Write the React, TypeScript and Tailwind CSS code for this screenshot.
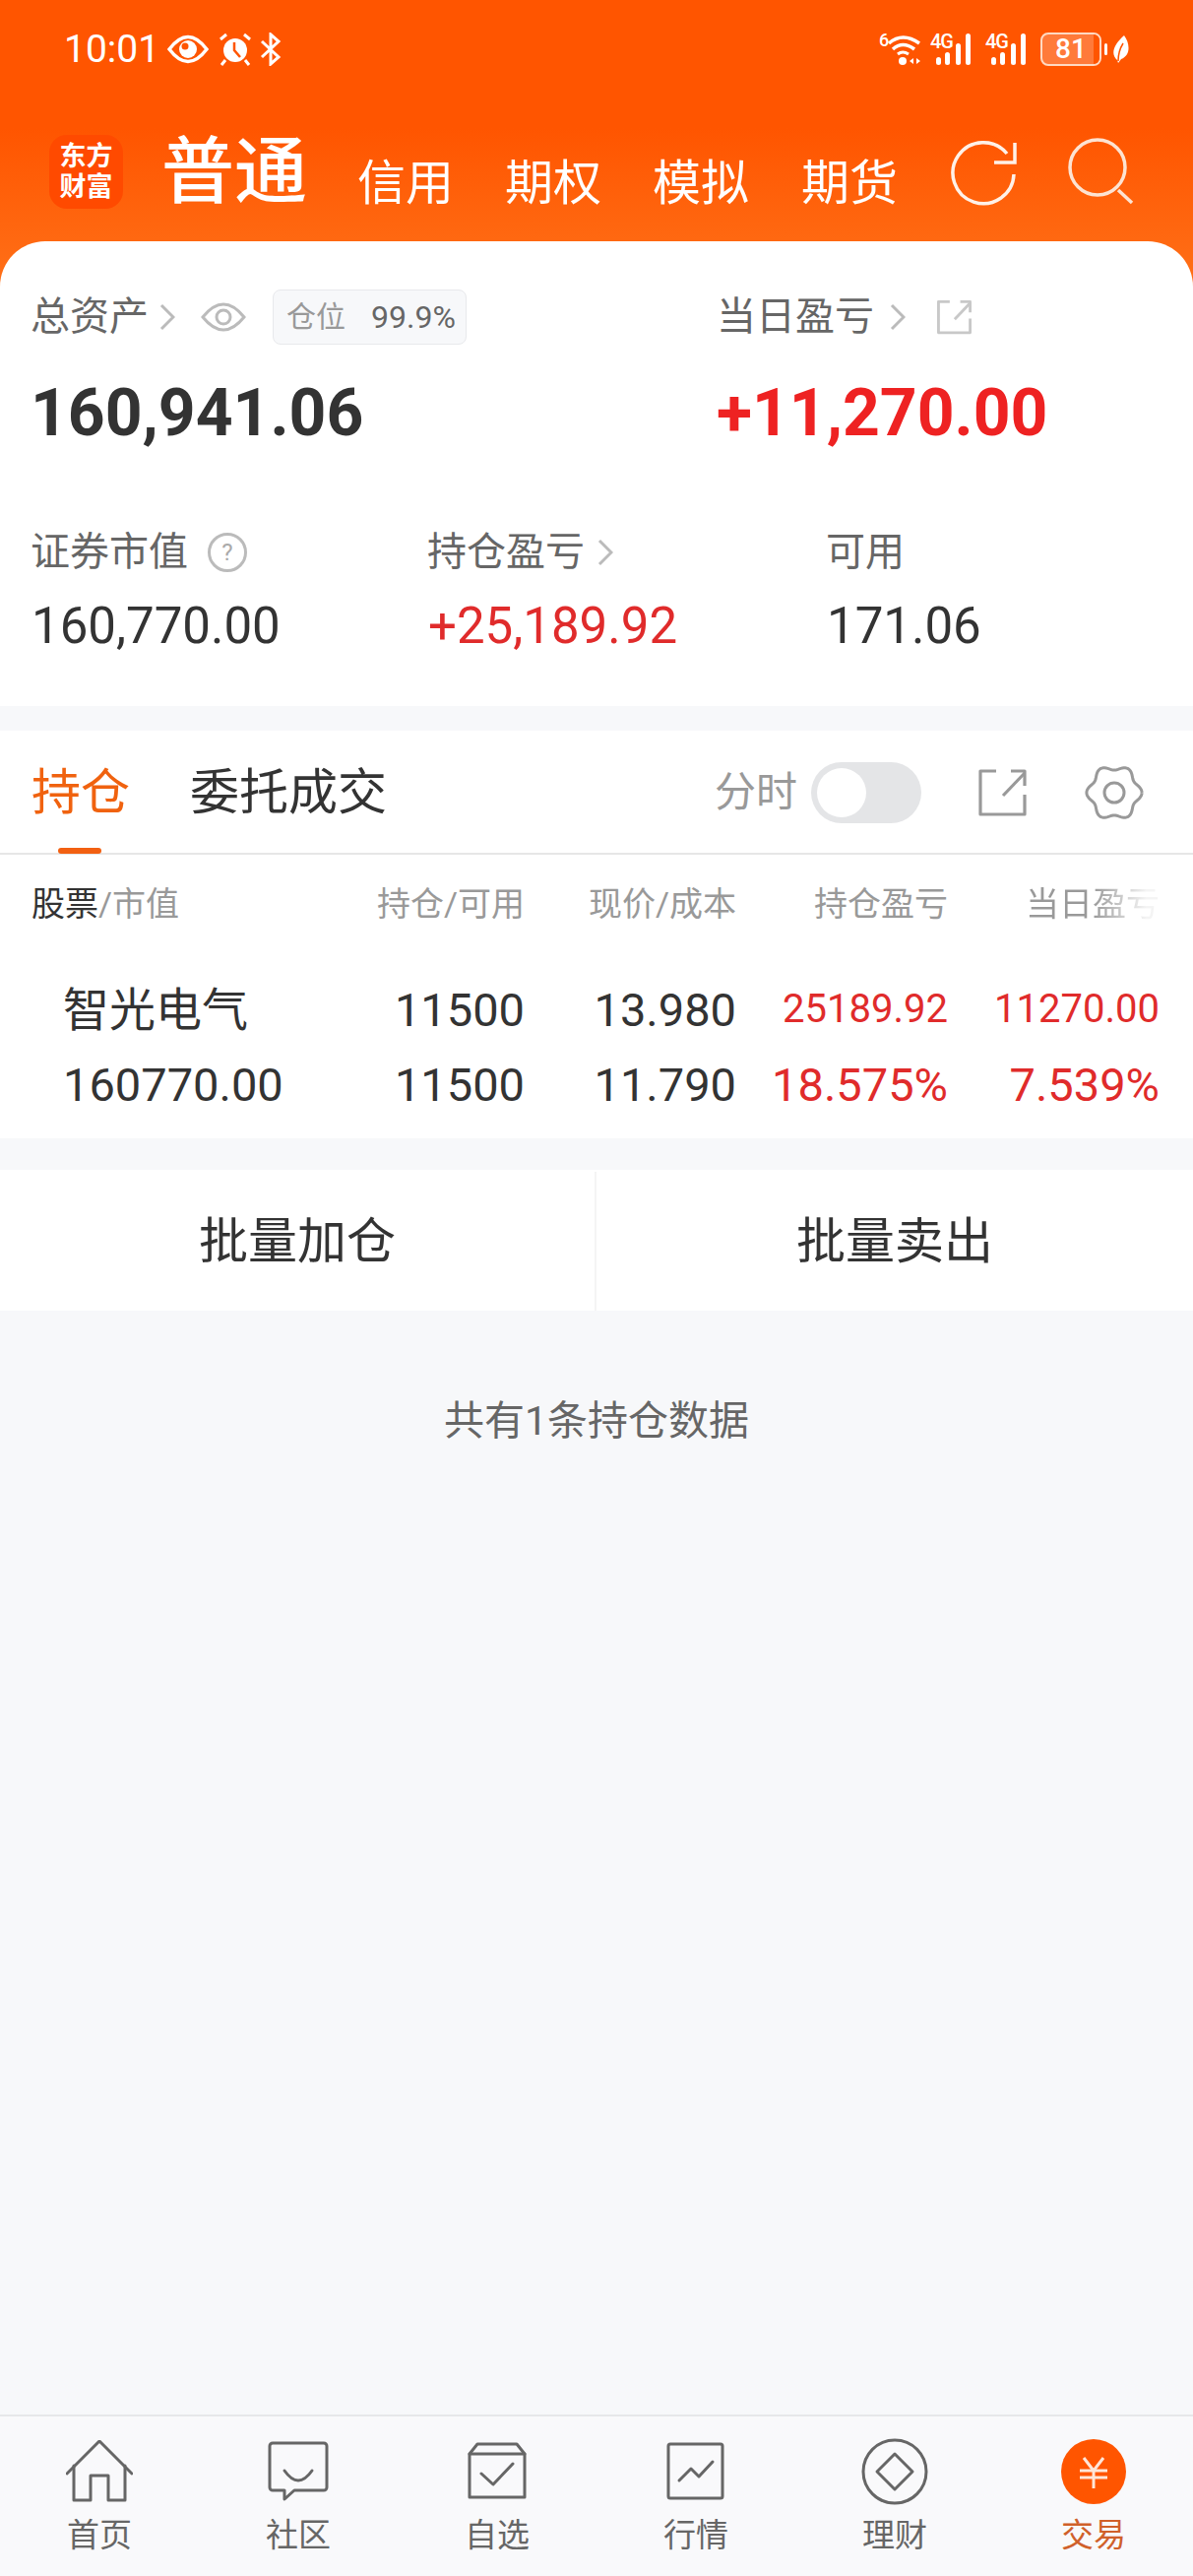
import type { ReactNode } from "react";

// gear outline: six soft lobes around a circle
const gearPath = Array.from({ length: 121 }, (_, i) => {
  const a = (i / 120) * Math.PI * 2;
  const r = 25.5 + 2.6 * Math.cos(6 * a);
  return `${i === 0 ? "M" : "L"}${(30 + r * Math.cos(a)).toFixed(2)} ${(29 + r * Math.sin(a)).toFixed(2)}`;
}).join(" ");

function Chevron({ className = "" }: { className?: string }) {
  return (
    <svg width="16" height="28" viewBox="0 0 16 28" className={className} fill="none" stroke="#bbbbbb" strokeWidth="3">
      <path d="M2 2 L14 14 L2 26" />
    </svg>
  );
}

function ShareIcon({ size, color, width }: { size: number; color: string; width: number }) {
  return (
    <svg width={size} height={size} viewBox="0 0 49 49" fill="none" stroke={color} strokeWidth={width} strokeLinejoin="round">
      <path d="M18 2 H2 V46 H47 V26" />
      <path d="M25 27 L47 4" />
      <path d="M33 2 H47 V17" />
    </svg>
  );
}

function Signal() {
  return (
    <div className="relative h-[34px] w-[46px]">
      <span className="absolute left-0 top-0 text-[20px] font-medium leading-[18px] tracking-[-1px] text-white">4G</span>
      <svg width="46" height="34" viewBox="0 0 46 34" fill="white">
        <rect x="6" y="25" width="5" height="8" rx="2.5" />
        <rect x="15" y="20" width="5" height="13" rx="2.5" />
        <rect x="26" y="11" width="5" height="22" rx="2.5" />
        <rect x="36" y="1" width="5" height="32" rx="2.5" />
      </svg>
    </div>
  );
}

function StatusBar() {
  return (
    <div className="flex h-[100px] items-center justify-between pl-[65px] pr-[64px]">
      <div className="flex items-center">
        <span className="w-[91px] text-[39px] leading-none text-white">10:01</span>
        <svg width="42" height="30" viewBox="0 0 42 30" className="ml-[14px]">
          <path d="M2 15 Q21 -10 40 15 Q21 40 2 15 Z" fill="none" stroke="white" strokeWidth="3.5" />
          <circle cx="21" cy="15" r="9" fill="white" />
          <circle cx="18" cy="12" r="3.5" fill="#ff5500" />
        </svg>
        <svg width="34" height="34" viewBox="0 0 34 34" className="ml-[10px]">
          <circle cx="17" cy="18" r="12" fill="white" />
          <path d="M16 10 V18 L22 25" fill="none" stroke="#ff5500" strokeWidth="2.5" />
          <path d="M2 7 L8 2 M32 7 L26 2 M7 28 L3 33 M27 28 L31 33" stroke="white" strokeWidth="3" />
        </svg>
        <svg width="22" height="34" viewBox="0 0 22 34" className="ml-[8px]" fill="none" stroke="white" strokeWidth="3">
          <path d="M2 9 L19 25 L11 32 V2 L19 9 L2 25" />
        </svg>
      </div>
      <div className="flex items-center">
        <div className="relative h-[34px] w-[44px]">
          <span className="absolute left-0 top-0 text-[18px] font-medium leading-[16px] text-white">6</span>
          <svg width="44" height="34" viewBox="0 0 44 34" fill="none" stroke="white">
            <path d="M10 11 Q24 -1 41 11" strokeWidth="3.5" />
            <path d="M14 17 Q24 8 36 17" strokeWidth="3.5" />
            <path d="M19 22 Q24 18 30 22" strokeWidth="3" />
            <circle cx="24" cy="29" r="4" fill="white" stroke="none" />
            <path d="M31 29 L35 26 V32 Z M38 26 V32 L42 29 Z" fill="white" stroke="none" />
          </svg>
        </div>
        <div className="ml-[8px] flex gap-[10px]">
          <Signal />
          <Signal />
        </div>
        <div className="relative ml-[10px] flex h-[34px] w-[62px] items-center justify-center overflow-hidden rounded-[8px] border-2 border-[#ffd9c2] bg-[#ff7a3a] text-[28px] font-medium leading-none text-white">
          <div className="absolute right-0 top-0 h-full w-[6px] bg-[#ff5500]" />
          <span className="relative">81</span>
        </div>
        <div className="ml-[3px] h-[12px] w-[3px] rounded-sm bg-white" />
        <svg width="18" height="28" viewBox="0 0 18 28" className="ml-[5px]" fill="white">
          <path d="M12 0 C18 8 19 20 9 24 L6 28 L5 25 C-3 18 3 8 12 0 Z" />
          <path d="M11 8 Q6 16 6 26" fill="none" stroke="#ff5500" strokeWidth="1.5" />
        </svg>
      </div>
    </div>
  );
}

function NavBar() {
  return (
    <div className="flex h-[145px] items-start pl-[50px] text-white">
      <div className="mt-[37px] flex h-[75px] w-[75px] flex-col items-center justify-center rounded-[18px] bg-[#ff4a00] text-[27px] font-bold leading-[31px]">
        <span>东方</span>
        <span>财富</span>
      </div>
      <span className="ml-[39px] mt-[38px] text-[74px] font-medium leading-[74px]">普通</span>
      <span className="ml-[51px] mt-[62px] text-[49px] leading-[49px]">信用</span>
      <span className="ml-[52px] mt-[62px] text-[49px] leading-[49px]">期权</span>
      <span className="ml-[52px] mt-[62px] text-[49px] leading-[49px]">模拟</span>
      <span className="ml-[53px] mt-[62px] text-[49px] leading-[49px]">期货</span>
      <svg width="68" height="68" viewBox="0 0 68 68" className="ml-[53px] mt-[41px]" fill="none" stroke="#fff1e8" strokeWidth="3.5">
        <path d="M65 36 A31 31 0 1 1 58 15" />
        <path d="M45 24 H66 V4" />
      </svg>
      <svg width="68" height="70" viewBox="0 0 68 70" className="ml-[51px] mt-[40px]" fill="none" stroke="#fde3d2" strokeWidth="3.5">
        <circle cx="31" cy="30" r="28" />
        <path d="M52 53 L66 66" />
      </svg>
    </div>
  );
}

function AssetCard() {
  return (
    <div className="rounded-t-[46px] bg-white pb-[55px] pl-[31px] pt-[49px]">
      <div className="grid grid-cols-[697px_1fr]">
        <div>
          <div className="flex h-[56px] items-center">
            <span className="text-[40px] leading-none text-[#666666]">总资产</span>
            <Chevron className="ml-[11px]" />
            <svg width="46" height="30" viewBox="0 0 46 30" className="ml-[26px]" fill="none" stroke="#bbbbbb" strokeWidth="3">
              <path d="M2 15 Q23 -11 44 15 Q23 41 2 15 Z" />
              <circle cx="23" cy="15" r="7" />
            </svg>
            <div className="ml-[27px] flex h-[56px] w-[197px] items-center rounded-[8px] border border-[#e8e9ec] bg-[#f7f8fa] pl-[13px]">
              <span className="text-[30px] leading-none text-[#999999]">仓位</span>
              <span className="ml-[26px] text-[32px] leading-none text-[#666666]">99.9%</span>
            </div>
          </div>
          <div className="mt-[37px] text-[66px] font-bold leading-[66px] text-[#333333]">160,941.06</div>
        </div>
        <div>
          <div className="flex h-[56px] items-center">
            <span className="text-[40px] leading-none text-[#666666]">当日盈亏</span>
            <Chevron className="ml-[16px]" />
            <div className="ml-[32px]">
              <ShareIcon size={35} color="#c8c8c8" width={4} />
            </div>
          </div>
          <div className="mt-[37px] text-[66px] font-bold leading-[66px] text-[#ee2222]">+11,270.00</div>
        </div>
      </div>
      <div className="mt-[88px] grid grid-cols-[403px_405px_1fr]">
        <div>
          <div className="flex h-[40px] items-center">
            <span className="text-[40px] leading-none text-[#666666]">证券市值</span>
            <span className="ml-[20px] flex h-[40px] w-[40px] items-center justify-center rounded-full border-[3px] border-[#bbbbbb] text-[24px] leading-none text-[#aaaaaa]">
              ?
            </span>
          </div>
          <div className="ml-[1px] mt-[29px] text-[51px] leading-[52px] text-[#333333]">160,770.00</div>
        </div>
        <div>
          <div className="flex h-[40px] items-center">
            <span className="text-[40px] leading-none text-[#666666]">持仓盈亏</span>
            <Chevron className="ml-[13px]" />
          </div>
          <div className="ml-[1px] mt-[29px] text-[51px] leading-[52px] text-[#e02b2b]">+25,189.92</div>
        </div>
        <div>
          <div className="flex h-[40px] items-center text-[40px] leading-none text-[#666666]">可用</div>
          <div className="ml-[1px] mt-[29px] text-[51px] leading-[52px] text-[#333333]">171.06</div>
        </div>
      </div>
    </div>
  );
}

function TabRow() {
  return (
    <div className="flex h-[126px] items-center border-b-2 border-[#e6e6e6] bg-white pl-[32px] pt-[2px]">
      <div className="relative text-[50px] leading-none text-[#f0620f]">
        持仓
        <div className="absolute left-[27px] top-[81px] h-[6px] w-[44px] rounded-full bg-[#f26012]" />
      </div>
      <span className="ml-[61px] text-[50px] leading-none text-[#333333]">委托成交</span>
      <span className="ml-[333px] text-[42px] leading-none text-[#999999]">分时</span>
      <div className="ml-[14px] flex h-[62px] w-[112px] items-center rounded-full bg-[#e4e5e7] pl-[6px]">
        <div className="h-[50px] w-[50px] rounded-full bg-white" />
      </div>
      <div className="ml-[58px]">
        <ShareIcon size={49} color="#999999" width={3.2} />
      </div>
      <svg width="60" height="58" viewBox="0 0 60 58" className="ml-[59px]" fill="none" stroke="#999999" strokeWidth="3">
        <path d={gearPath} />
        <circle cx="30" cy="29" r="10" />
      </svg>
    </div>
  );
}

const numCell = "text-right leading-none";

function Holdings() {
  return (
    <div className="bg-white">
      <div className="grid h-[100px] grid-cols-[360px_173px_215px_215px_215px] items-center text-[34px] leading-none text-[#999999]">
        <span className="pl-[32px]">
          <span className="text-[#333333]">股票</span>/市值
        </span>
        <span className="text-right">持仓/可用</span>
        <span className="text-right">现价/成本</span>
        <span className="text-right">持仓盈亏</span>
        <span className="text-right">
          <span className="bg-[linear-gradient(90deg,#999999_50%,#f4f4f4_90%)] bg-clip-text text-transparent">当日盈亏</span>
        </span>
      </div>
      <div className="grid auto-rows-[76px] grid-cols-[360px_173px_215px_215px_215px] items-center pb-[17px] pt-[19px] text-[47px] text-[#333333]">
        <span className="pl-[64px] leading-none">智光电气</span>
        <span className={numCell}>11500</span>
        <span className={numCell}>13.980</span>
        <span className={`${numCell} text-[40px] text-[#e02b2b]`}>25189.92</span>
        <span className={`${numCell} text-[40px] text-[#e02b2b]`}>11270.00</span>
        <span className="pl-[64px] leading-none">160770.00</span>
        <span className={numCell}>11500</span>
        <span className={numCell}>11.790</span>
        <span className={`${numCell} text-[#e02b2b]`}>18.575%</span>
        <span className={`${numCell} text-[#e02b2b]`}>7.539%</span>
      </div>
    </div>
  );
}

function BatchButtons() {
  return (
    <div className="mt-[32px] grid h-[143px] grid-cols-2 bg-white pt-[2px] text-[50px] leading-none text-[#333333]">
      <div className="flex items-center justify-center border-r-2 border-[#f4f4f4]">批量加仓</div>
      <div className="flex items-center justify-center">批量卖出</div>
    </div>
  );
}

function TabItem({ label, icon, active }: { label: string; icon: ReactNode; active?: boolean }) {
  return (
    <div className="flex flex-col items-center">
      <div className="flex h-[68px] items-center justify-center">{icon}</div>
      <span className={`mt-[14px] text-[33px] leading-none ${active ? "text-[#d0602a]" : "text-[#666666]"}`}>{label}</span>
    </div>
  );
}

const iconStroke = { fill: "none", stroke: "#666666", strokeWidth: 3, strokeLinejoin: "round" as const, strokeLinecap: "round" as const };

function TabBar() {
  return (
    <div className="grid h-[164px] grid-cols-6 border-t-2 border-[#e6e7e9] bg-[#f9f9fb] pt-[22px]">
      <TabItem
        label="首页"
        icon={
          <svg width="68" height="64" viewBox="0 0 68 64" {...iconStroke}>
            <path d="M1 34 L34 1 L67 34" />
            <path d="M8 26 V61 H25 V36 H43 V61 H60 V26" />
          </svg>
        }
      />
      <TabItem
        label="社区"
        icon={
          <svg width="62" height="62" viewBox="0 0 62 62" {...iconStroke}>
            <path d="M5 2 H57 a3 3 0 0 1 3 3 V47 a3 3 0 0 1 -3 3 H27 L17 59 V50 H5 a3 3 0 0 1 -3 -3 V5 a3 3 0 0 1 3 -3 Z" />
            <path d="M17 30 Q31 50 45 30" />
          </svg>
        }
      />
      <TabItem
        label="自选"
        icon={
          <svg width="62" height="60" viewBox="0 0 62 60" {...iconStroke}>
            <path d="M3 12 L11 2 H51 L59 12 V56 H3 Z" />
            <path d="M3 12 H59" />
            <path d="M15 32 L27 43 L47 22" />
          </svg>
        }
      />
      <TabItem
        label="行情"
        icon={
          <svg width="60" height="60" viewBox="0 0 60 60" {...iconStroke}>
            <rect x="2" y="2" width="55" height="55" rx="2" />
            <path d="M13 39 L25 27 L33 35 L47 20" />
          </svg>
        }
      />
      <TabItem
        label="理财"
        icon={
          <svg width="68" height="68" viewBox="0 0 68 68" {...iconStroke}>
            <circle cx="34" cy="34" r="32" />
            <path d="M34 16 L52 34 L34 52 L16 34 Z" />
          </svg>
        }
      />
      <TabItem
        label="交易"
        active
        icon={
          <svg width="66" height="66" viewBox="0 0 66 66" fill="none" stroke="#ffe6d8" strokeWidth="3">
            <circle cx="33" cy="33" r="33" fill="#ff5500" stroke="none" />
            <path d="M23 19 L33 32 L43 19" />
            <path d="M19 32 H47 M19 39 H47 M33 32 V50" />
          </svg>
        }
      />
    </div>
  );
}

export default function App() {
  return (
    <div className="flex h-[2616px] w-[1212px] flex-col overflow-hidden bg-[#f7f8fa] font-[Roboto,'Noto_Sans_CJK_SC',sans-serif]">
      <div className="bg-[linear-gradient(#ff5500_0px,#ff5500_130px,#ff7018_290px)]">
        <StatusBar />
        <NavBar />
        <AssetCard />
      </div>
      <div className="mt-[25px]">
        <TabRow />
        <Holdings />
        <BatchButtons />
      </div>
      <div className="mt-[62px] flex h-[100px] flex-1 justify-center text-[41px] leading-[100px] text-[#666666]">共有1条持仓数据</div>
      <TabBar />
    </div>
  );
}
